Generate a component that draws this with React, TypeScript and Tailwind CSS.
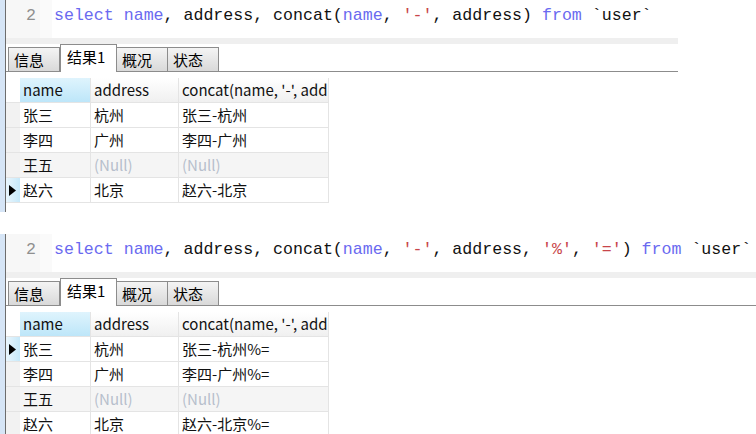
import React from "react";

type Row = { name: string; address: string | null; concat: string | null; current?: boolean };

const mono = "[font-family:'Liberation_Mono','Courier_New',monospace]";
const cjk = "[font-family:'Noto_Sans_CJK_SC','Noto_Sans',sans-serif]";

const Kw = ({ children }: { children: React.ReactNode }) => <span className="text-[#6a6af0]">{children}</span>;
const Str = ({ children }: { children: React.ReactNode }) => <span className="text-[#c8454a]">{children}</span>;

const Tabs = ({ width }: { width: string }) => (
  <div className={`flex items-end h-[28px] border-b border-[#8c8c8c] pl-[2px] ${width}`}>
    {["信息", "结果1", "概况", "状态"].map((t) =>
      t === "结果1" ? (
        <div key={t} className="h-[28px] w-[57px] -mb-px bg-white border border-b-0 border-[#8c8c8c] pl-[6px] pt-[2px] text-[15px] leading-[20px] text-black">
          {t}
        </div>
      ) : (
        <div key={t} className="h-[24px] w-[52px] -ml-px first:ml-0 bg-gradient-to-b from-[#f4f4f4] to-[#d9d9d9] border border-b-0 border-[#8c8c8c] pl-[5px] pt-[2px] text-[15px] leading-[20px] text-black">
          {t}
        </div>
      )
    )}
  </div>
);

const Grid = ({ rows }: { rows: Row[] }) => (
  <div className={`mt-[6px] w-[323px] text-[15px] ${cjk}`}>
    <div className="flex h-[25px] border-b border-[#e4e4e4]">
      <div className="w-[14px]" />
      <div className="w-[70px] bg-gradient-to-b from-[#dff4fd] to-[#bde6f9] pl-[3px] leading-[24px] text-[#111]">name</div>
      <div className="w-[88px] border-l border-[#e4e4e4] bg-gradient-to-b from-white to-[#f0f0f0] pl-[3px] leading-[24px] text-[#111]">address</div>
      <div className="w-[151px] border-x border-[#e4e4e4] bg-gradient-to-b from-white to-[#f0f0f0] pl-[3px] leading-[24px] text-[#111] overflow-hidden whitespace-nowrap">concat(name, '-', address)</div>
    </div>
    {rows.map((r) => (
      <div key={r.name} className={`flex h-[25px] border-b border-[#e4e4e4] ${r.address === null ? "bg-[#f5f5f5]" : "bg-white"}`}>
        <div className={`w-[14px] flex items-center pl-[3px] ${r.current ? "bg-gradient-to-r from-[#eaf6fd] to-[#c6e9fa]" : "bg-[#f2f2f2]"}`}>
          {r.current && (
            <svg width="7" height="11" viewBox="0 0 7 11">
              <path d="M0 0 L7 5.5 L0 11 Z" fill="#000" />
            </svg>
          )}
        </div>
        <div className="w-[70px] pl-[3px] leading-[24px] text-[#111]">{r.name}</div>
        <div className={`w-[88px] border-l border-[#e4e4e4] pl-[3px] leading-[24px] ${r.address === null ? "text-[#b7bfcc]" : "text-[#111]"}`}>
          {r.address ?? "(Null)"}
        </div>
        <div className={`w-[151px] border-x border-[#e4e4e4] pl-[3px] leading-[24px] ${r.concat === null ? "text-[#b7bfcc]" : "text-[#111]"}`}>
          {r.concat ?? "(Null)"}
        </div>
      </div>
    ))}
  </div>
);

const Section = ({ code, rows, width, height }: { code: React.ReactNode; rows: Row[]; width: string; height: string }) => (
  <div className={`flex shrink-0 ${height}`}>
    <div className="w-[5px] bg-[#d6e5f6]" />
    <div className="w-px bg-[#6d6d6d]" />
    <div className="flex flex-col">
      <div className={`flex h-[38px] ${width}`}>
        <div className={`w-[34px] bg-[#f7f7f7] text-right pr-[4px] pt-[5px] text-[16.6px] leading-[22px] text-[#8f8f8f] ${mono}`}>2</div>
        <div className="w-[12px] bg-[#fafafa]" />
        <div className={`pl-[2px] pt-[5px] text-[16.6px] leading-[22px] text-[#111] whitespace-nowrap ${mono}`}>{code}</div>
      </div>
      <div className={`h-[6px] bg-[#efefef] ${width}`} />
      <div className={cjk}>
        <Tabs width={width} />
      </div>
      <Grid rows={rows} />
    </div>
  </div>
);

export default function App() {
  const rows1: Row[] = [
    { name: "张三", address: "杭州", concat: "张三-杭州" },
    { name: "李四", address: "广州", concat: "李四-广州" },
    { name: "王五", address: null, concat: null },
    { name: "赵六", address: "北京", concat: "赵六-北京", current: true },
  ];
  const rows2: Row[] = [
    { name: "张三", address: "杭州", concat: "张三-杭州%=", current: true },
    { name: "李四", address: "广州", concat: "李四-广州%=" },
    { name: "王五", address: null, concat: null },
    { name: "赵六", address: "北京", concat: "赵六-北京%=" },
  ];

  return (
    <div className="w-[756px] h-[434px] bg-white overflow-hidden flex flex-col gap-[22px]">
      <Section
        width="w-[672px]"
        height="h-[212px]"
        rows={rows1}
        code={
          <>
            <Kw>select</Kw> <Kw>name</Kw>, address, concat(<Kw>name</Kw>, <Str>'-'</Str>, address) <Kw>from</Kw> `user`
          </>
        }
      />
      <Section
        width="w-[750px]"
        height="h-[210px]"
        rows={rows2}
        code={
          <>
            <Kw>select</Kw> <Kw>name</Kw>, address, concat(<Kw>name</Kw>, <Str>'-'</Str>, address, <Str>'%'</Str>, <Str>'='</Str>) <Kw>from</Kw> `user`
          </>
        }
      />
    </div>
  );
}
